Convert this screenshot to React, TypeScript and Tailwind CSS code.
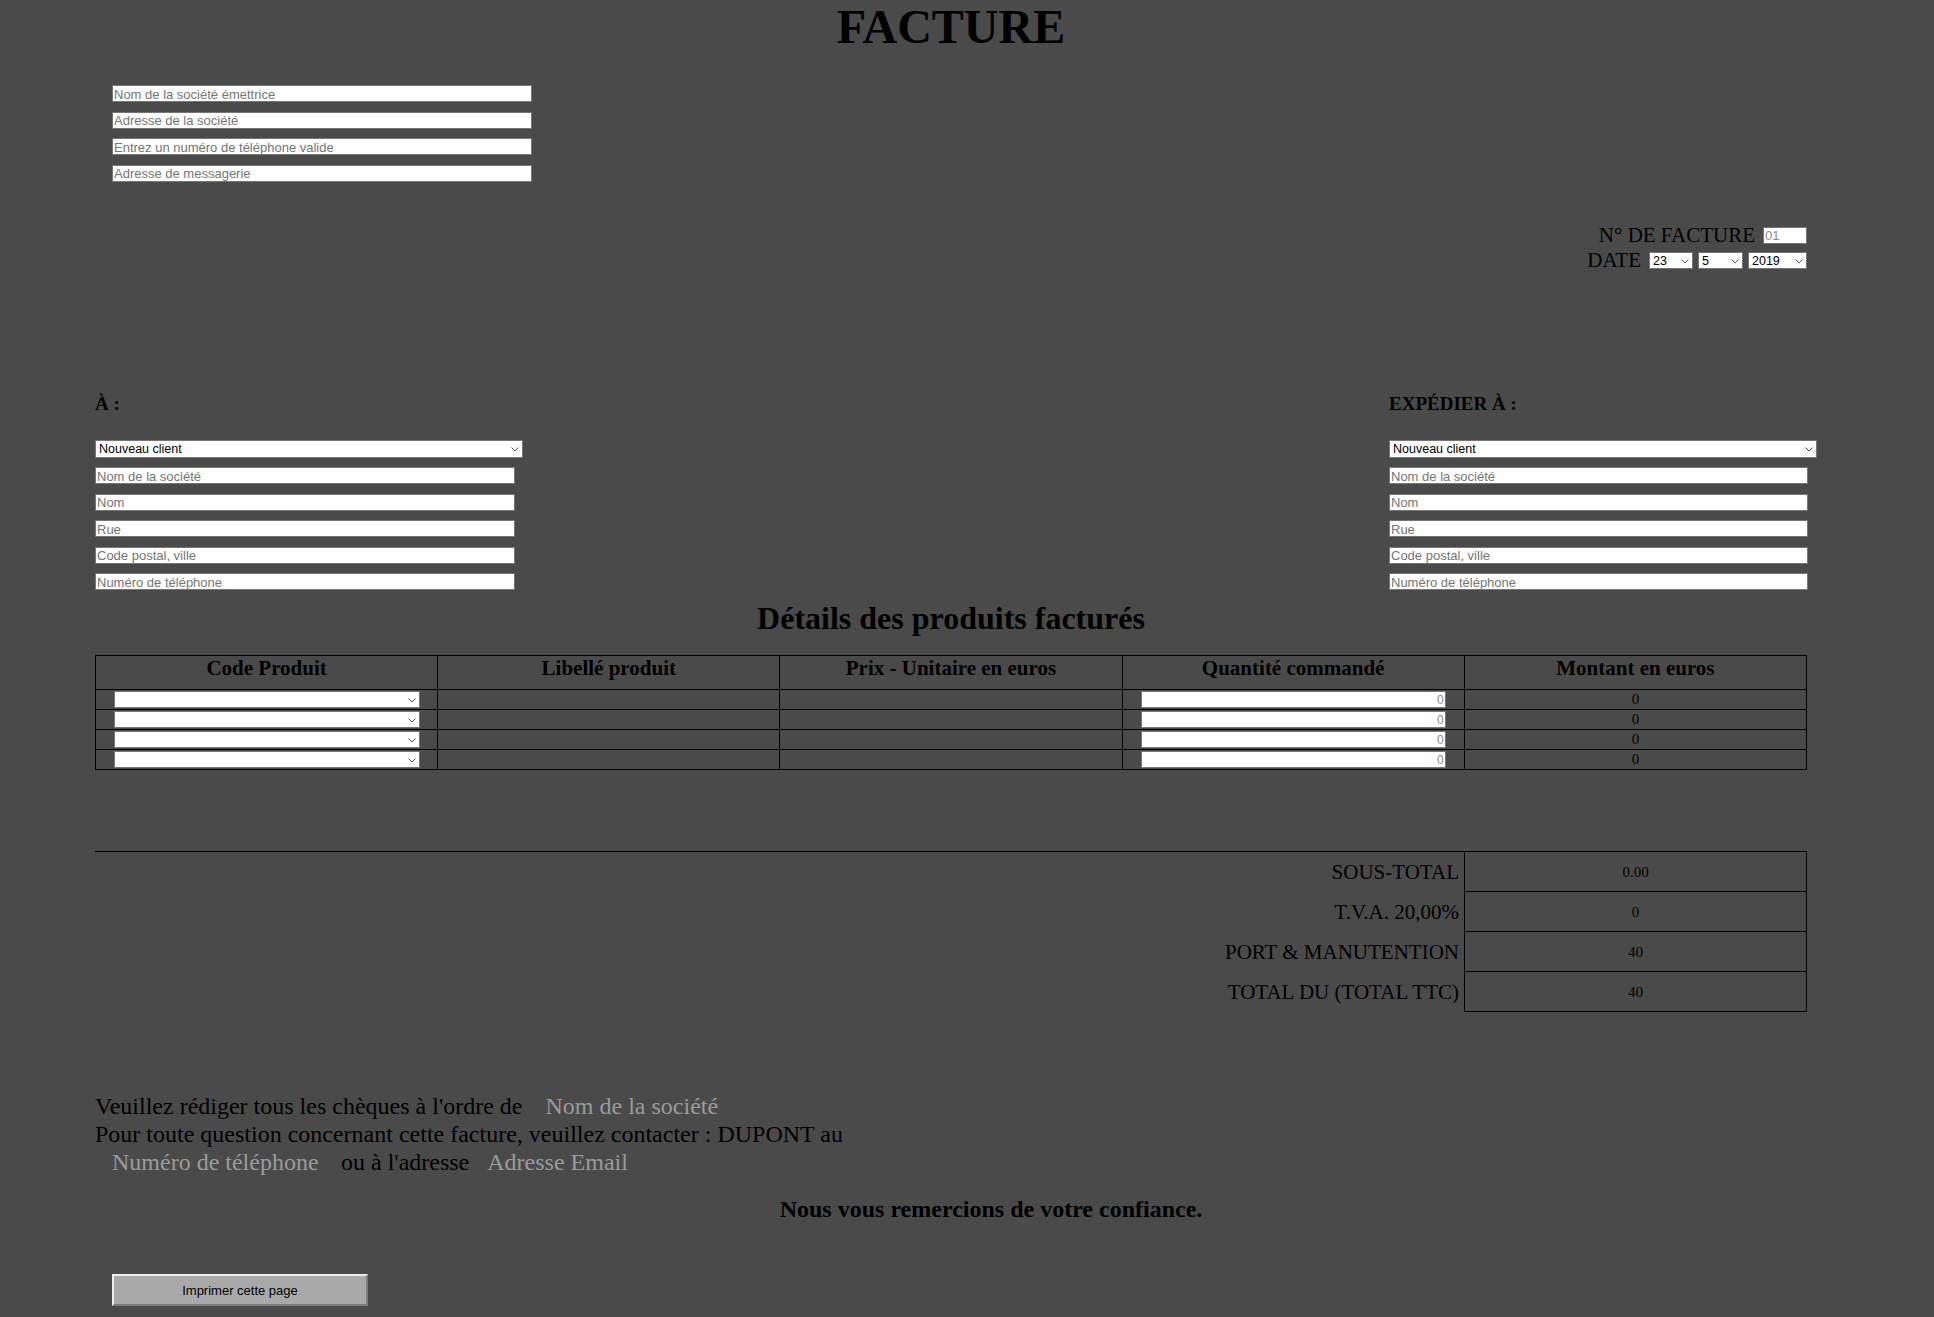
import React from "react";

const sans = "font-['Liberation_Sans',Arial,sans-serif]";

function Chevron() {
  return (
    <svg
      className="pointer-events-none absolute right-[4px] top-[7px]"
      width="8"
      height="5"
      viewBox="0 0 8 5"
      fill="none"
    >
      <path d="M0.5 0.5 L4 4 L7.5 0.5" stroke="#555" strokeWidth="1" />
    </svg>
  );
}

function Select({ className, options = [""] }: { className: string; options?: string[] }) {
  return (
    <div className={`relative ${className}`}>
      <select
        className={`block h-full w-full appearance-none border border-[#767676] bg-white pl-[3px] text-[12.5px] leading-none text-black outline-none ${sans}`}
      >
        {options.map((o) => (
          <option key={o}>{o}</option>
        ))}
      </select>
      <Chevron />
    </div>
  );
}

function Field({ placeholder, w = "w-[420px]" }: { placeholder: string; w?: string }) {
  return (
    <input
      placeholder={placeholder}
      className={`block h-[17px] ${w} border border-[#767676] bg-white px-[1px] pt-[1px] text-[13px] leading-none text-black outline-none placeholder:text-[#757575] ${sans}`}
    />
  );
}

function Client({ title, right }: { title: string; right?: boolean }) {
  return (
    <div className={right ? "w-[418px]" : "w-[428px]"}>
      <h3 className="text-[19px] font-bold leading-[22px]">{title}</h3>
      <Select className="mt-[25px] h-[18px] w-[428px]" options={["Nouveau client"]} />
      <div className="mt-[9.5px] flex flex-col gap-[9.5px]">
        {["Nom de la société", "Nom", "Rue", "Code postal, ville", "Numéro de téléphone"].map((p) => (
          <Field key={p} placeholder={p} w={right ? "w-[419px]" : "w-[420px]"} />
        ))}
      </div>
    </div>
  );
}

const headers = ["Code Produit", "Libellé produit", "Prix - Unitaire en euros", "Quantité commandé", "Montant en euros"];

const totals = [
  ["SOUS-TOTAL", "0.00"],
  ["T.V.A. 20,00%", "0"],
  ["PORT & MANUTENTION", "40"],
  ["TOTAL DU (TOTAL TTC)", "40"],
];

export default function App() {
  return (
    <div className="min-h-screen bg-[#4a4a4a] pb-[40px] font-['Liberation_Serif','Times_New_Roman',serif] text-black">
      <div className="ml-[95px] w-[1712px]">
        <h1 className="text-center text-[48px] font-bold leading-[53px]">FACTURE</h1>

        {/* Société émettrice */}
        <div className="mt-[32px] flex flex-col gap-[9.67px] pl-[17px]">
          <Field placeholder="Nom de la société émettrice" />
          <Field placeholder="Adresse de la société" />
          <Field placeholder="Entrez un numéro de téléphone valide" />
          <Field placeholder="Adresse de messagerie" />
        </div>

        {/* N° et date */}
        <div className="mt-[42px] flex flex-col items-end text-[21px] leading-[23px]">
          <div className="flex h-[24px] items-center gap-[8px]">
            <span>N° DE FACTURE</span>
            <input
              placeholder="01"
              className={`h-[17px] w-[44px] border border-[#767676] bg-white px-[1px] text-[13px] leading-none outline-none placeholder:text-[#8a8a8a] ${sans}`}
            />
          </div>
          <div className="flex h-[25px] items-center pt-[1px]">
            <span className="mr-[8px]">DATE</span>
            <Select className="h-[17px] w-[44px]" options={["23"]} />
            <Select className="ml-[5px] h-[17px] w-[45px]" options={["5"]} />
            <Select className="ml-[5px] h-[17px] w-[59px]" options={["2019"]} />
          </div>
        </div>

        {/* Destinataires */}
        <div className="mt-[120px] flex justify-between">
          <Client title="À :" />
          <Client title="EXPÉDIER À :" right />
        </div>

        <h1 className="mt-[10px] text-center text-[32px] font-bold leading-[36px]">Détails des produits facturés</h1>

        <table className="mt-[19px] w-full table-fixed border-collapse border border-black">
          <thead>
            <tr>
              {headers.map((h) => (
                <th key={h} className="border border-black px-[1px] pt-[1px] pb-[10px] text-[21px] font-bold leading-[22px]">
                  {h}
                </th>
              ))}
            </tr>
          </thead>
          <tbody>
            {[0, 1, 2, 3].map((i) => (
              <tr key={i}>
                <td className="border border-black p-[1px]">
                  <Select className="mx-auto h-[17px] w-[306px]" />
                </td>
                <td className="border border-black p-[1px]" />
                <td className="border border-black p-[1px]" />
                <td className="border border-black p-[1px]">
                  <input
                    placeholder="0"
                    className={`mx-auto block h-[17px] w-[305px] border border-[#767676] bg-white px-[1px] text-right text-[12px] leading-none outline-none placeholder:text-[#8a8a8a] ${sans}`}
                  />
                </td>
                <td className="border border-black p-[1px] text-center text-[15px] leading-[17px]">0</td>
              </tr>
            ))}
          </tbody>
        </table>

        {/* Totaux */}
        <div className="mt-[81px] border-t border-black">
          {totals.map(([label, value]) => (
            <div key={label} className="flex h-[40px]">
              <div className="flex flex-1 items-center justify-end pr-[5px] text-[21px] leading-[23px]">{label}</div>
              <div className="flex w-[343px] items-center justify-center border-x border-b border-black text-[15px]">
                {value}
              </div>
            </div>
          ))}
        </div>

        {/* Conditions */}
        <div className="mt-[80px] text-[24px] leading-[28px]">
          Veuillez rédiger tous les chèques à l'ordre de{" "}
          <input
            placeholder="Nom de la société"
            className="w-[240px] bg-transparent pl-[17px] outline-none placeholder:text-[#9b9b9b]"
          />
          <br />
          Pour toute question concernant cette facture, veuillez contacter : DUPONT au
          <br />
          <input
            placeholder="Numéro de téléphone"
            className="w-[240px] bg-transparent pl-[17px] outline-none placeholder:text-[#9b9b9b]"
          />{" "}
          ou à l'adresse{" "}
          <input
            placeholder="Adresse Email"
            className="w-[240px] bg-transparent pl-[12px] outline-none placeholder:text-[#9b9b9b]"
          />
        </div>

        <h2 className="mt-[19px] w-[1792px] text-center text-[24px] font-bold leading-[28px]">
          Nous vous remercions de votre confiance.
        </h2>

        <button
          className={`ml-[17px] mt-[51px] block h-[32px] w-[256px] border-2 border-t-[#eeeeee] border-l-[#eeeeee] border-b-[#7c7c7c] border-r-[#7c7c7c] bg-[#a9a9a9] text-[13px] text-black ${sans}`}
        >
          Imprimer cette page
        </button>
      </div>
    </div>
  );
}
